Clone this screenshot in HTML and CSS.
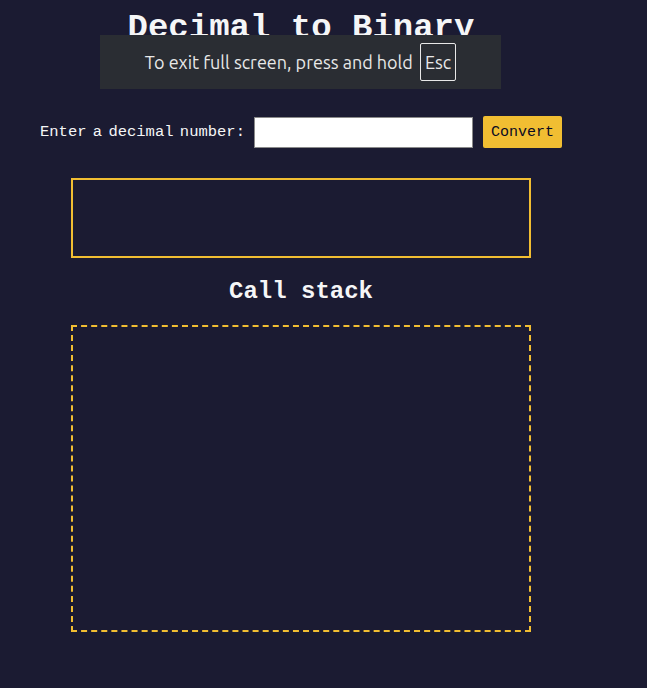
FILE: index.html
```html
<!DOCTYPE html>
<html lang="en">
<head>
<meta charset="utf-8">
<title>Decimal to Binary</title>
<link rel="stylesheet" href="styles.css">
</head>
<body>
<main class="page">
  <h1 class="title">Decimal to Binary</h1>
  <div class="form-row">
    <label class="label" for="number-input">Enter a decimal number:</label>
    <input class="number-input" id="number-input" type="number">
    <button class="convert-btn" type="button">Convert</button>
  </div>
  <div class="result"></div>
  <h2 class="subtitle">Call stack</h2>
  <div class="animation"></div>
</main>
<div class="fs-notice">
  <span>To exit full screen, press and hold</span>
  <span class="esc">Esc</span>
</div>
</body>
</html>
```
FILE: styles.css
```css
* { box-sizing: border-box; }
html, body {
  margin: 0;
  padding: 0;
  background: #1b1b32;
  color: #f5f6f7;
}
body {
  width: 647px;
  height: 688px;
  overflow: hidden;
  font-family: "Liberation Mono", "DejaVu Sans Mono", monospace;
}
.page {
  width: 602px;
  display: flex;
  flex-direction: column;
  align-items: center;
}
.title {
  margin: 8px 0 0;
  font-size: 34px;
  line-height: 40px;
  font-weight: bold;
}
.form-row {
  display: flex;
  align-items: center;
  margin-top: 68px;
  margin-left: 40px;
  align-self: flex-start;
}
.label {
  font-size: 15.5px;
  word-spacing: -3px;
  margin-right: 9px;
}
.number-input {
  width: 219px;
  height: 31px;
  border: 1px solid #8a8a8a;
  background: #ffffff;
  margin: 0 10px 0 0;
}
.convert-btn {
  height: 32px;
  width: 79px;
  padding: 0;
  border: none;
  border-radius: 2px;
  background: #f1be32;
  color: #0a0a23;
  font-family: "Liberation Mono", "DejaVu Sans Mono", monospace;
  font-size: 15px;
}
.result {
  width: 460px;
  height: 80px;
  margin-top: 30px;
  border: 2px solid #f1be32;
}
.subtitle {
  margin: 20px 0 0;
  font-size: 24px;
  line-height: 28px;
  font-weight: bold;
}
.animation {
  width: 460px;
  height: 307px;
  margin-top: 19px;
  border: 2px dashed #f1be32;
}
.fs-notice {
  position: absolute;
  left: 100px;
  top: 35px;
  width: 401px;
  height: 54px;
  background: #2a2d33;
  color: #e8e8e8;
  font-family: "Ubuntu", "Noto Sans", "Open Sans", sans-serif;
  font-size: 18px;
  display: flex;
  align-items: center;
  justify-content: center;
  gap: 7px;
}
.esc {
  border: 1px solid #e8e8e8;
  border-radius: 2px;
  padding: 5px 4px;
  line-height: 26px;
}
```
